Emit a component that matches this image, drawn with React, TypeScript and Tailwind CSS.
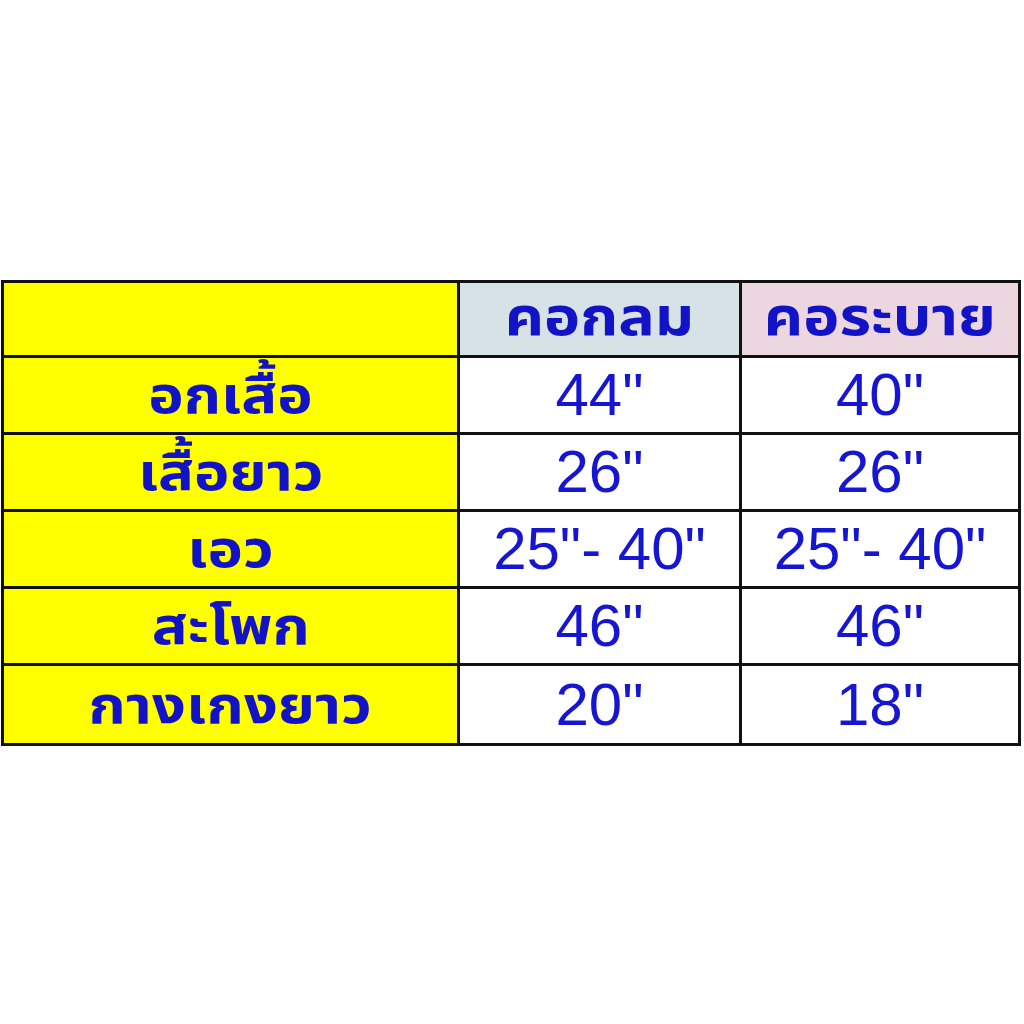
export default function App() {
  const rows = [
    { label: "อกเสื้อ", a: '44"', b: '40"' },
    { label: "เสื้อยาว", a: '26"', b: '26"' },
    { label: "เอว", a: '25"- 40"', b: '25"- 40"' },
    { label: "สะโพก", a: '46"', b: '46"' },
    { label: "กางเกงยาว", a: '20"', b: '18"' },
  ];

  return (
    <div className="w-[1024px] h-[1024px] bg-white flex flex-col pt-[280px] pl-[1px]">
      <div className="w-[1020px] border-[3px] border-[#111] grid grid-cols-[456px_282px_276px] bg-white">
        <div className="h-[75px] bg-[#ffff00] border-r-[3px] border-b-[3px] border-[#111]" />
        <div className="h-[75px] bg-[#d6e2e6] border-r-[3px] border-b-[3px] border-[#111] flex items-center justify-center leading-[1.3] text-[#1212c6] text-[53px] font-bold font-['Noto_Sans_Thai','Noto_Sans',sans-serif]">
          <span className="inline-block scale-x-[1.15]">คอกลม</span>
        </div>
        <div className="h-[75px] bg-[#ecd6e0] border-b-[3px] border-[#111] flex items-center justify-center leading-[1.3] text-[#1212c6] text-[53px] font-bold font-['Noto_Sans_Thai','Noto_Sans',sans-serif]">
          <span className="inline-block scale-x-[1.15]">คอระบาย</span>
        </div>
        {rows.map((r, i) => {
          const last = i === rows.length - 1;
          return [
            <div
              key={r.label + "l"}
              className={
                last
                  ? "h-[77px] bg-[#ffff00] border-r-[3px] border-[#111] flex items-center justify-center pt-[6px] leading-[1.3] text-[#1212c6] text-[52px] font-bold font-['Noto_Sans_Thai','Noto_Sans',sans-serif]"
                  : "h-[77px] bg-[#ffff00] border-r-[3px] border-b-[3px] border-[#111] flex items-center justify-center pt-[6px] leading-[1.3] text-[#1212c6] text-[52px] font-bold font-['Noto_Sans_Thai','Noto_Sans',sans-serif]"
              }
            >
              <span className="inline-block scale-x-[1.15]">{r.label}</span>
            </div>,
            <div
              key={r.label + "a"}
              className={
                last
                  ? "h-[77px] border-r-[3px] border-[#111] flex items-center justify-center leading-none text-[#1616d2] text-[60px] font-['Liberation_Sans',Arial,sans-serif]"
                  : "h-[77px] border-r-[3px] border-b-[3px] border-[#111] flex items-center justify-center leading-none text-[#1616d2] text-[60px] font-['Liberation_Sans',Arial,sans-serif]"
              }
            >
              {r.a}
            </div>,
            <div
              key={r.label + "b"}
              className={
                last
                  ? "h-[77px] flex items-center justify-center leading-none text-[#1616d2] text-[60px] font-['Liberation_Sans',Arial,sans-serif]"
                  : "h-[77px] border-b-[3px] border-[#111] flex items-center justify-center leading-none text-[#1616d2] text-[60px] font-['Liberation_Sans',Arial,sans-serif]"
              }
            >
              {r.b}
            </div>,
          ];
        })}
      </div>
    </div>
  );
}
